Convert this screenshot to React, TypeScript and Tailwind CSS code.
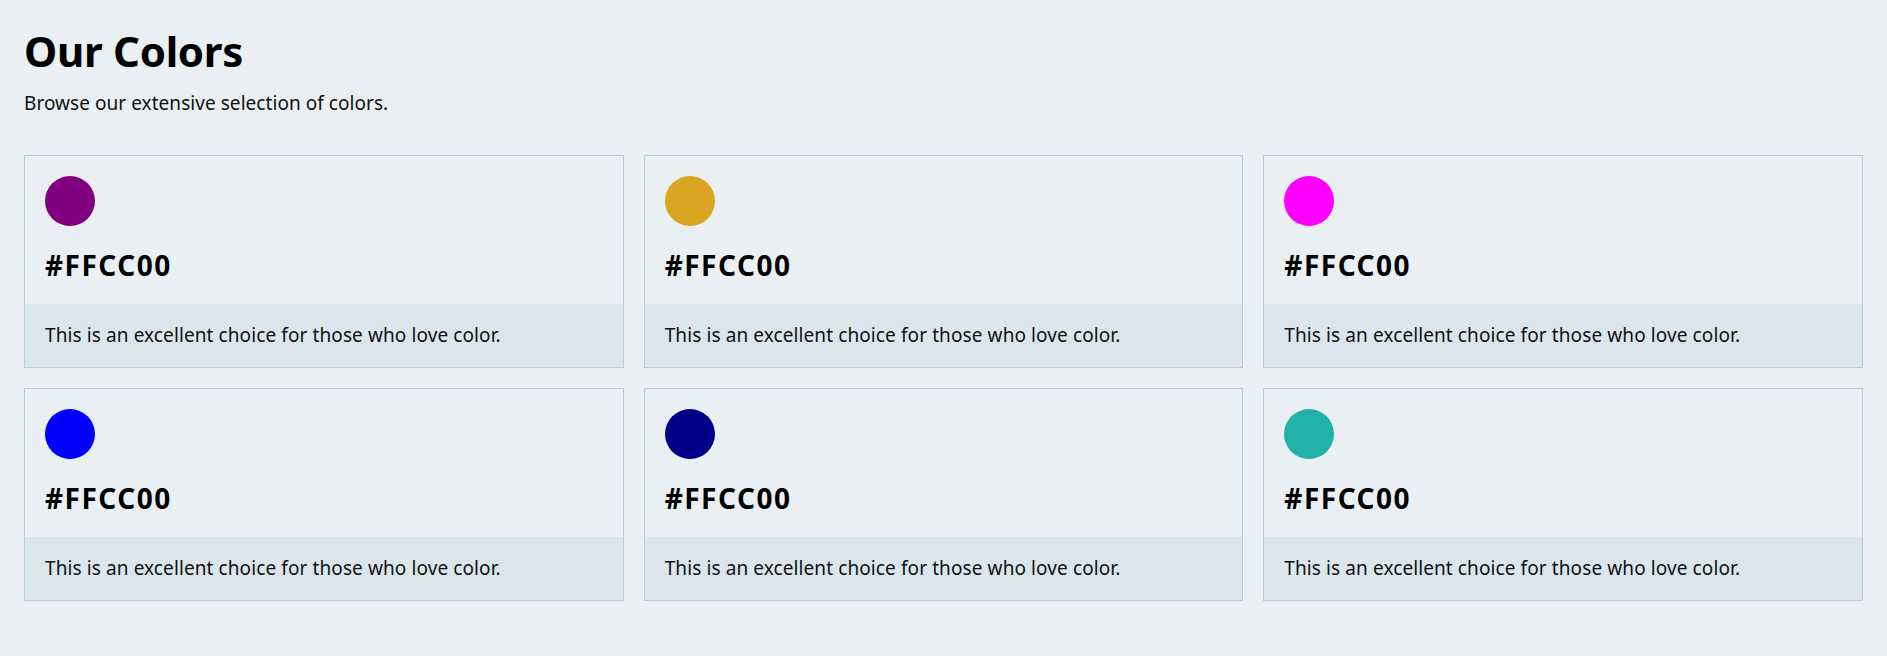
import React from "react";

const colors = ["#800080", "#DAA520", "#FF00FF", "#0000FF", "#00008B", "#20B2AA"];

export default function App() {
  return (
    <div className="min-h-screen bg-[#e9eff2] px-6 pt-[27px] pb-6 text-black" style={{ fontFamily: '"Noto Sans", sans-serif' }}>
      <h1 className="text-[42px] font-bold leading-[48px] tracking-[-0.3px]">Our Colors</h1>
      <p className="mt-[14px] text-[19px] leading-[28px] tracking-[0.05px] text-[#111]">Browse our extensive selection of colors.</p>
      <div className="mt-[38px] grid grid-cols-3 gap-5">
        {colors.map((c, i) => (
          <div key={i} className="border border-[#bccad1] bg-[#e9eff2]">
            <div className="px-5 pt-5 pb-[21px]">
              <div className="h-[50px] w-[50px] rounded-full" style={{ backgroundColor: c }} />
              <h2 className="mt-[21px] text-[28px] font-bold leading-[36px] tracking-[1.5px]">#FFCC00</h2>
            </div>
            <div className="bg-[#dae6eb] px-5 pt-[17px] pb-[18px] text-[19px] leading-[28px] tracking-[0.1px] text-[#111]">
              This is an excellent choice for those who love color.
            </div>
          </div>
        ))}
      </div>
    </div>
  );
}
